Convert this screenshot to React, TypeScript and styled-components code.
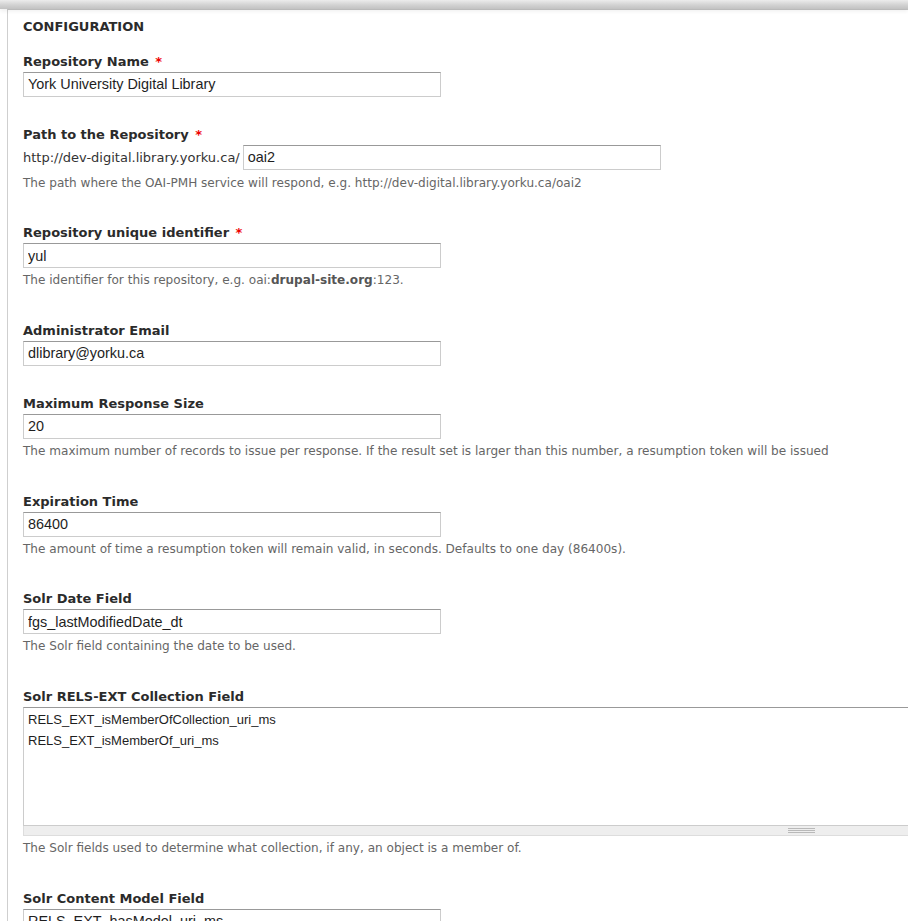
import React from "react";
import styled, { createGlobalStyle } from "styled-components";

const GlobalStyle = createGlobalStyle`
  html, body {
    margin: 0;
    padding: 0;
    overflow: hidden;
    background: #fff;
  }
  body {
    font-family: "DejaVu Sans", "Noto Sans", sans-serif;
    color: #333;
  }
`;

const Page = styled.div`
  width: 908px;
  height: 921px;
  overflow: hidden;
  background: #fff;
`;

const TopBar = styled.div`
  position: relative;
  z-index: 1;
  height: 9px;
  background: linear-gradient(to bottom, #ececec 0%, #d2d2d2 55%, #c2c2c2 100%);
  box-shadow: 0 2px 4px rgba(0, 0, 0, 0.07);
`;

const Fieldset = styled.section`
  margin-left: 7px;
  border-top: 1px solid #c4c4c4;
  border-left: 1px solid #cfcfcf;
  padding: 8.5px 0 0 15px;
  background: #fff;
`;

const Legend = styled.div`
  font-size: 13px;
  line-height: 16px;
  font-weight: bold;
  text-transform: uppercase;
  color: #2b2b2b;
  margin-bottom: 19px;
`;

const FormItem = styled.div`
  display: flow-root;
  margin-bottom: 30px;
`;

const Label = styled.label`
  display: block;
  font-size: 13px;
  line-height: 16px;
  font-weight: bold;
  color: #2b2b2b;
  margin-bottom: 2px;
`;

const Required = styled.span`
  color: #e00;
  margin-left: 2px;
`;

const TextInput = styled.input`
  display: block;
  box-sizing: border-box;
  width: 418px;
  height: 25px;
  margin: 0;
  padding: 0 4px;
  border: 1px solid #ccc;
  border-top-color: #999;
  border-radius: 0;
  background: #fff;
  font-family: "Liberation Sans", Arial, sans-serif;
  font-size: 14.4px;
  color: #1e1e1e;
  outline: none;
`;

const PrefixRow = styled.div`
  display: flex;
  align-items: center;
  gap: 3px;
  margin-top: 2px;
  padding-bottom: 1px;
`;

const Prefix = styled.span`
  font-size: 13px;
  color: #333;
  white-space: nowrap;
`;

const Description = styled.div`
  font-size: 12.07px;
  line-height: 16px;
  color: #666;
  margin-top: 4px;
  padding-bottom: 4.7px;
  white-space: nowrap;

  strong {
    color: #555;
    font-weight: bold;
  }
`;

const TextareaWrap = styled.div`
  width: 1557px;
`;

const TextArea = styled.textarea`
  display: block;
  box-sizing: border-box;
  width: 100%;
  height: 119px;
  margin: 0;
  padding: 1px 4px;
  border: 1px solid #ccc;
  border-top-color: #999;
  border-radius: 0;
  resize: none;
  font-family: "Liberation Sans", Arial, sans-serif;
  font-size: 13px;
  line-height: 21px;
  color: #1e1e1e;
  outline: none;
  overflow: hidden;
`;

const Grippie = styled.div`
  box-sizing: border-box;
  height: 10px;
  background: #eee;
  border: 1px solid #ddd;
  border-top: none;
  display: flex;
  justify-content: center;
  align-items: flex-start;
  padding-top: 2px;
`;

const GripIcon = () => (
  <svg width="27" height="6" viewBox="0 0 27 6" aria-hidden="true">
    <rect x="0" y="0" width="27" height="1" fill="#b9b9b9" />
    <rect x="0" y="2" width="27" height="1" fill="#b9b9b9" />
    <rect x="0" y="4" width="27" height="1" fill="#b9b9b9" />
  </svg>
);

type Field = {
  label: string;
  required?: boolean;
  value: string;
  description?: React.ReactNode;
};

const fieldsBefore: Field[] = [
  { label: "Repository Name", required: true, value: "York University Digital Library" },
];

const fieldsAfter: Field[] = [
  {
    label: "Repository unique identifier",
    required: true,
    value: "yul",
    description: (
      <>
        The identifier for this repository, e.g. oai:<strong>drupal-site.org</strong>:123.
      </>
    ),
  },
  { label: "Administrator Email", value: "dlibrary@yorku.ca" },
  {
    label: "Maximum Response Size",
    value: "20",
    description:
      "The maximum number of records to issue per response. If the result set is larger than this number, a resumption token will be issued",
  },
  {
    label: "Expiration Time",
    value: "86400",
    description:
      "The amount of time a resumption token will remain valid, in seconds. Defaults to one day (86400s).",
  },
  {
    label: "Solr Date Field",
    value: "fgs_lastModifiedDate_dt",
    description: "The Solr field containing the date to be used.",
  },
];

const TextField = ({ f }: { f: Field }) => (
  <FormItem>
    <Label>
      {f.label}
      {f.required && <Required> *</Required>}
    </Label>
    <TextInput type="text" defaultValue={f.value} />
    {f.description && <Description>{f.description}</Description>}
  </FormItem>
);

export default function App() {
  return (
    <>
      <GlobalStyle />
      <Page>
        <TopBar />
        <Fieldset>
          <Legend>Configuration</Legend>

          {fieldsBefore.map((f) => (
            <TextField key={f.label} f={f} />
          ))}

          <FormItem>
            <Label>
              Path to the Repository<Required> *</Required>
            </Label>
            <PrefixRow>
              <Prefix>http://dev-digital.library.yorku.ca/</Prefix>
              <TextInput type="text" defaultValue="oai2" />
            </PrefixRow>
            <Description>
              The path where the OAI-PMH service will respond, e.g. http://dev-digital.library.yorku.ca/oai2
            </Description>
          </FormItem>

          {fieldsAfter.map((f) => (
            <TextField key={f.label} f={f} />
          ))}

          <FormItem>
            <Label>Solr RELS-EXT Collection Field</Label>
            <TextareaWrap>
              <TextArea
                defaultValue={"RELS_EXT_isMemberOfCollection_uri_ms\nRELS_EXT_isMemberOf_uri_ms"}
              />
              <Grippie>
                <GripIcon />
              </Grippie>
            </TextareaWrap>
            <Description>
              The Solr fields used to determine what collection, if any, an object is a member of.
            </Description>
          </FormItem>

          <FormItem>
            <Label>Solr Content Model Field</Label>
            <TextInput type="text" defaultValue="RELS_EXT_hasModel_uri_ms" />
          </FormItem>
        </Fieldset>
      </Page>
    </>
  );
}
